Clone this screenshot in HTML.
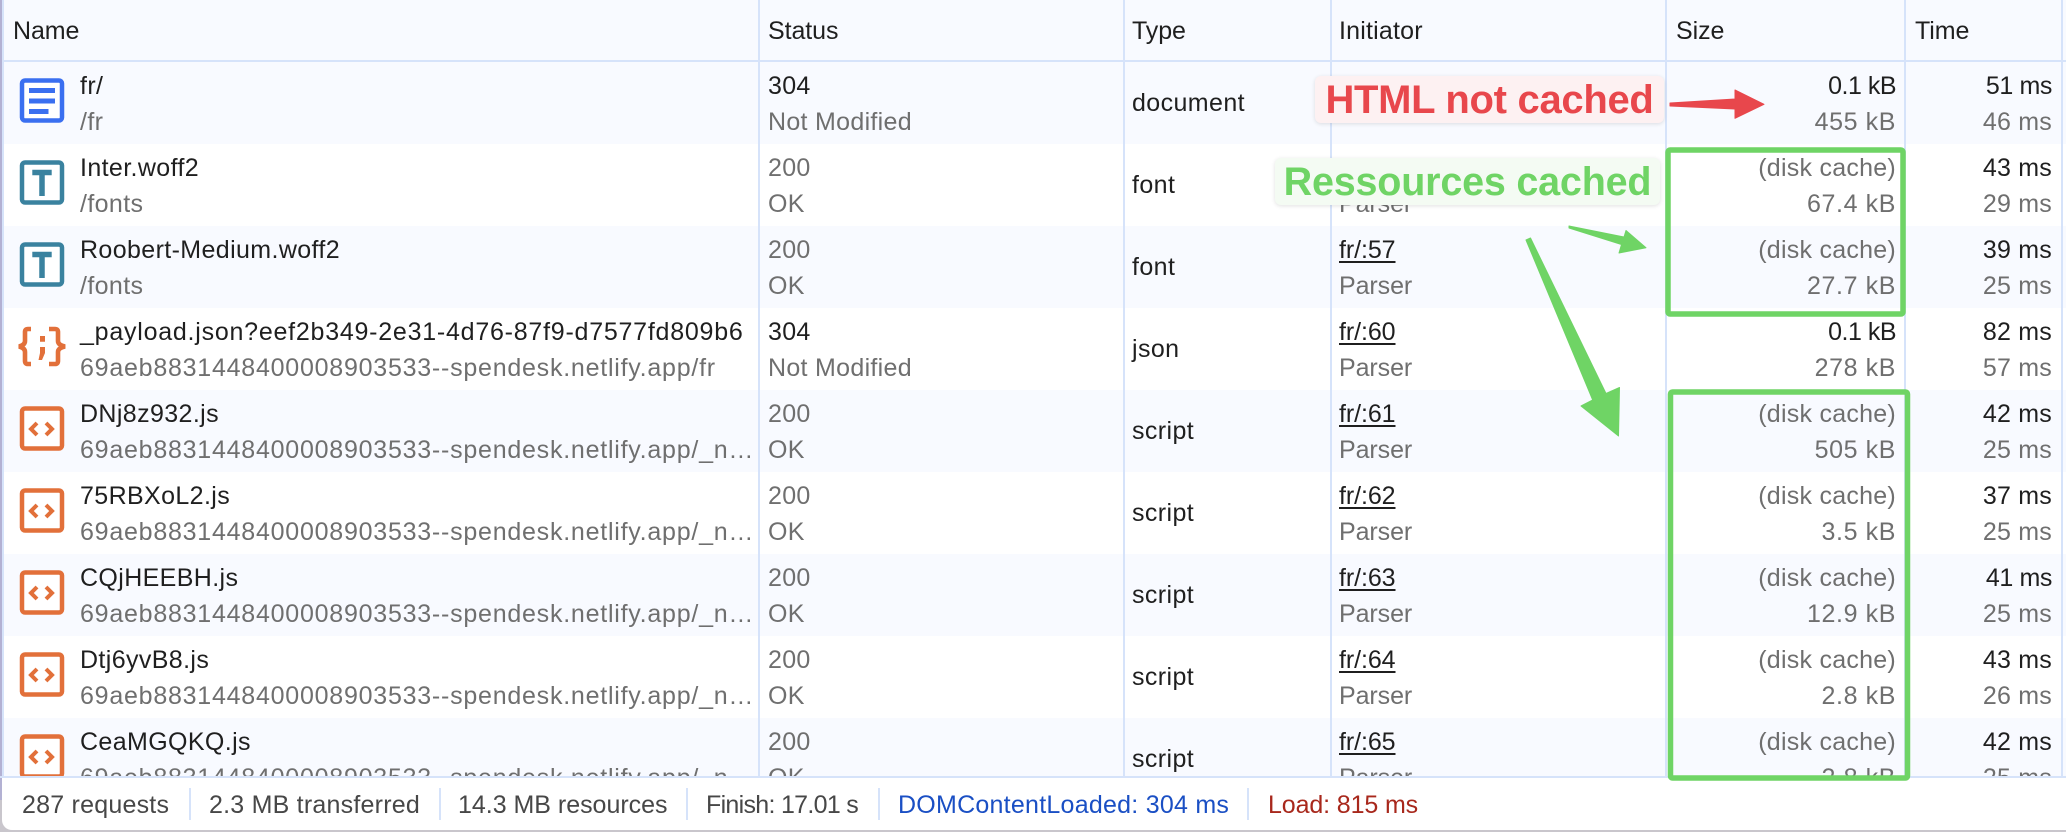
<!DOCTYPE html>
<html><head><meta charset="utf-8"><style>
html,body{margin:0;padding:0;background:#c9c6cc}
#w{position:relative;width:2066px;height:832px;overflow:hidden;background:#c9c6cc;font-family:"Liberation Sans",sans-serif;font-size:25px;letter-spacing:-.08px;color:#1f1f1f}
#win{position:absolute;left:2px;top:0;width:2064px;height:830px;background:#fff;border-radius:0 0 0 10px;overflow:hidden}
#strip{position:absolute;left:0;top:0;width:3px;height:800px;background:#b3b1d3}
#tb{position:absolute;left:0;top:0;width:2066px;height:777px;overflow:hidden}
.r{position:absolute;left:3px;width:2063px;height:82px}
.o{background:#f8faff}
.t{position:absolute;white-space:nowrap;line-height:36px}
.g{color:#6f6f6f}
.a{top:6px}.b{top:42px}
.n{left:77px;letter-spacing:.38px}.s{left:765px;letter-spacing:.3px}.y{left:1129px;top:23px;letter-spacing:.4px}.i{left:1336px}
.z{right:170px;letter-spacing:.25px}.z.b{letter-spacing:.6px}.m{right:14px;letter-spacing:.2px}
.k{letter-spacing:-.5px !important}
.q{letter-spacing:-.4px !important}
.v{letter-spacing:.76px}
.u{text-decoration:underline;text-underline-offset:3px;text-decoration-thickness:2px}
.l{position:absolute;top:0;width:2px;height:777px;background:#d6e3fa}
svg.c{position:absolute;left:16px;top:16px}
#h{position:absolute;left:3px;top:0;width:2063px;height:60px;background:#f8faff;border-bottom:2px solid #d6e3fa}
#f{position:absolute;left:0;top:776px;width:2066px;height:2px;background:#d6e3fa}
.ft{position:absolute;top:787px;white-space:nowrap;line-height:36px;color:#474747;letter-spacing:.22px}
.sp{position:absolute;top:788px;width:2px;height:32px;background:#d6e3fa}
.note{position:absolute;border-radius:6px;font-weight:bold;white-space:nowrap;box-shadow:0 1px 4px rgba(0,0,0,.12);text-align:center}
</style></head><body><div id="w"><div id="strip"></div><div id="win"></div>
<div id="tb">
<div id="h"></div>
<div class="t" style="left:13px;top:13px">Name</div>
<div class="t" style="left:768px;top:13px">Status</div>
<div class="t" style="left:1132px;top:13px">Type</div>
<div class="t" style="left:1339px;top:13px;letter-spacing:.2px">Initiator</div>
<div class="t" style="left:1676px;top:13px">Size</div>
<div class="t" style="left:1915px;top:13px">Time</div>

<div class="r o" style="top:62px">
<svg class="c" width="46" height="46" viewBox="0 0 46 46"><rect x="3" y="2.500" width="40" height="40" rx="3" fill="#fff" stroke="#3a6ff0" stroke-width="4.500"/><path d="M10 12.500H36M10 23H36M10 33.500H29.500" stroke="#3a6ff0" stroke-width="5" fill="none"/></svg>
<div class="t a n">fr/</div><div class="t b n g">/fr</div>
<div class="t a s">304</div><div class="t b s g">Not Modified</div>
<div class="t y">document</div>
<div class="t a z k">0.1 kB</div><div class="t b z g">455 kB</div>
<div class="t a m q">51 ms</div><div class="t b m g">46 ms</div></div>

<div class="r" style="top:144px">
<svg class="c" width="46" height="46" viewBox="0 0 46 46"><rect x="3" y="2.500" width="40" height="40" rx="3" fill="#fff" stroke="#3a829f" stroke-width="4.500"/><path d="M13.300 12.500H32.700M23 12V36" stroke="#3a829f" stroke-width="5.500" fill="none"/></svg>
<div class="t a n">Inter.woff2</div><div class="t b n g">/fonts</div>
<div class="t a s g">200</div><div class="t b s g">OK</div>
<div class="t y">font</div>
<div class="t a i u">fr/:56</div><div class="t b i g">Parser</div>
<div class="t a z g">(disk cache)</div><div class="t b z g">67.4 kB</div>
<div class="t a m">43 ms</div><div class="t b m g">29 ms</div></div>

<div class="r o" style="top:226px">
<svg class="c" width="46" height="46" viewBox="0 0 46 46"><rect x="3" y="2.500" width="40" height="40" rx="3" fill="#fff" stroke="#3a829f" stroke-width="4.500"/><path d="M13.300 12.500H32.700M23 12V36" stroke="#3a829f" stroke-width="5.500" fill="none"/></svg>
<div class="t a n">Roobert-Medium.woff2</div><div class="t b n g">/fonts</div>
<div class="t a s g">200</div><div class="t b s g">OK</div>
<div class="t y">font</div>
<div class="t a i u">fr/:57</div><div class="t b i g">Parser</div>
<div class="t a z g">(disk cache)</div><div class="t b z g">27.7 kB</div>
<div class="t a m">39 ms</div><div class="t b m g">25 ms</div></div>

<div class="r" style="top:308px">
<svg class="c" style="left:13px;top:18px" width="52" height="41" viewBox="0 0 52 41"><path d="M15 3H12Q9 3 9 6V15Q9 19 3 20.500Q9 22 9 26V35Q9 38 12 38H15M33 3H39Q42 3 42 6V15Q42 19 49 20.500Q42 22 42 26V35Q42 38 39 38H33" fill="none" stroke="#e2703a" stroke-width="4.600"/><path d="M24 10H29V15.700H24ZM24 21H29V27L26 34H22.500L24 27Z" fill="#e2703a"/></svg>
<div class="t a n v">_payload.json?eef2b349-2e31-4d76-87f9-d7577fd809b6</div><div class="t b n g v">69aeb8831448400008903533--spendesk.netlify.app/fr</div>
<div class="t a s">304</div><div class="t b s g">Not Modified</div>
<div class="t y">json</div>
<div class="t a i u">fr/:60</div><div class="t b i g">Parser</div>
<div class="t a z k">0.1 kB</div><div class="t b z g">278 kB</div>
<div class="t a m">82 ms</div><div class="t b m g">57 ms</div></div>

<div class="r o" style="top:390px">
<svg class="c" width="46" height="46" viewBox="0 0 46 46"><rect x="3" y="2.500" width="40" height="40" rx="3" fill="#fff" stroke="#e2703a" stroke-width="4.500"/><path d="M18 17L12 23L18 29M27 17L33 23L27 29" fill="none" stroke="#e2703a" stroke-width="4"/></svg>
<div class="t a n">DNj8z932.js</div><div class="t b n g v">69aeb8831448400008903533--spendesk.netlify.app/_n…</div>
<div class="t a s g">200</div><div class="t b s g">OK</div>
<div class="t y">script</div>
<div class="t a i u">fr/:61</div><div class="t b i g">Parser</div>
<div class="t a z g">(disk cache)</div><div class="t b z g">505 kB</div>
<div class="t a m">42 ms</div><div class="t b m g">25 ms</div></div>

<div class="r" style="top:472px">
<svg class="c" width="46" height="46" viewBox="0 0 46 46"><rect x="3" y="2.500" width="40" height="40" rx="3" fill="#fff" stroke="#e2703a" stroke-width="4.500"/><path d="M18 17L12 23L18 29M27 17L33 23L27 29" fill="none" stroke="#e2703a" stroke-width="4"/></svg>
<div class="t a n">75RBXoL2.js</div><div class="t b n g v">69aeb8831448400008903533--spendesk.netlify.app/_n…</div>
<div class="t a s g">200</div><div class="t b s g">OK</div>
<div class="t y">script</div>
<div class="t a i u">fr/:62</div><div class="t b i g">Parser</div>
<div class="t a z g">(disk cache)</div><div class="t b z g">3.5 kB</div>
<div class="t a m">37 ms</div><div class="t b m g">25 ms</div></div>

<div class="r o" style="top:554px">
<svg class="c" width="46" height="46" viewBox="0 0 46 46"><rect x="3" y="2.500" width="40" height="40" rx="3" fill="#fff" stroke="#e2703a" stroke-width="4.500"/><path d="M18 17L12 23L18 29M27 17L33 23L27 29" fill="none" stroke="#e2703a" stroke-width="4"/></svg>
<div class="t a n">CQjHEEBH.js</div><div class="t b n g v">69aeb8831448400008903533--spendesk.netlify.app/_n…</div>
<div class="t a s g">200</div><div class="t b s g">OK</div>
<div class="t y">script</div>
<div class="t a i u">fr/:63</div><div class="t b i g">Parser</div>
<div class="t a z g">(disk cache)</div><div class="t b z g">12.9 kB</div>
<div class="t a m q">41 ms</div><div class="t b m g">25 ms</div></div>

<div class="r" style="top:636px">
<svg class="c" width="46" height="46" viewBox="0 0 46 46"><rect x="3" y="2.500" width="40" height="40" rx="3" fill="#fff" stroke="#e2703a" stroke-width="4.500"/><path d="M18 17L12 23L18 29M27 17L33 23L27 29" fill="none" stroke="#e2703a" stroke-width="4"/></svg>
<div class="t a n">Dtj6yvB8.js</div><div class="t b n g v">69aeb8831448400008903533--spendesk.netlify.app/_n…</div>
<div class="t a s g">200</div><div class="t b s g">OK</div>
<div class="t y">script</div>
<div class="t a i u">fr/:64</div><div class="t b i g">Parser</div>
<div class="t a z g">(disk cache)</div><div class="t b z g">2.8 kB</div>
<div class="t a m">43 ms</div><div class="t b m g">26 ms</div></div>

<div class="r o" style="top:718px">
<svg class="c" width="46" height="46" viewBox="0 0 46 46"><rect x="3" y="2.500" width="40" height="40" rx="3" fill="#fff" stroke="#e2703a" stroke-width="4.500"/><path d="M18 17L12 23L18 29M27 17L33 23L27 29" fill="none" stroke="#e2703a" stroke-width="4"/></svg>
<div class="t a n">CeaMGQKQ.js</div><div class="t b n g v">69aeb8831448400008903533--spendesk.netlify.app/_n…</div>
<div class="t a s g">200</div><div class="t b s g">OK</div>
<div class="t y">script</div>
<div class="t a i u">fr/:65</div><div class="t b i g">Parser</div>
<div class="t a z g">(disk cache)</div><div class="t b z g">2.8 kB</div>
<div class="t a m">42 ms</div><div class="t b m g">25 ms</div></div>

<div class="l" style="left:2px"></div><div class="l" style="left:758px"></div><div class="l" style="left:1123px"></div><div class="l" style="left:1330px"></div><div class="l" style="left:1665px"></div><div class="l" style="left:1904px"></div><div class="l" style="left:2061px"></div>
</div>
<div id="f"></div>
<div class="ft" style="left:22px">287 requests</div>
<div class="sp" style="left:189px"></div>
<div class="ft" style="left:209px">2.3 MB transferred</div>
<div class="sp" style="left:439px"></div>
<div class="ft" style="left:458px;letter-spacing:-.02px">14.3 MB resources</div>
<div class="sp" style="left:686px"></div>
<div class="ft" style="left:706px;letter-spacing:-.7px">Finish: 17.01 s</div>
<div class="sp" style="left:878px"></div>
<div class="ft" style="left:898px;color:#1a4fc4;letter-spacing:.25px">DOMContentLoaded: 304 ms</div>
<div class="sp" style="left:1247px"></div>
<div class="ft" style="left:1268px;color:#a8281c;letter-spacing:-.12px">Load: 815 ms</div>

<div class="note" style="left:1315px;top:76px;width:349px;height:47px;line-height:48px;background:#fdf1f2;color:#e8474c;font-size:40px;letter-spacing:-.3px">HTML not cached</div>
<div class="note" style="left:1275px;top:158px;width:385px;height:47px;line-height:48px;background:#f4fbf3;color:#6fd465;font-size:39.500px;letter-spacing:-.2px">Ressources cached</div>

<svg style="position:absolute;left:0;top:0" width="2066" height="832" viewBox="0 0 2066 832">
<polygon points="1670,103 1735,99 1735,90 1764,104.300 1735,118.300 1735,109 1670,106" fill="#e8474c" stroke="#e8474c" stroke-width="1" stroke-linejoin="round"/>
<polygon points="1569,226 1624,237 1626,230.500 1646,247.700 1619,253 1621.500,244.500 1569,228" fill="#6fd465" stroke="#6fd465" stroke-width="1" stroke-linejoin="round"/>
<polygon points="1526,240 1530.500,238 1606,393.500 1619.500,387.500 1618.500,436 1581,406 1592.700,400" fill="#6fd465" stroke="#6fd465" stroke-width="1" stroke-linejoin="round"/>
<rect x="1668" y="150" width="235" height="164" rx="2" fill="none" stroke="#6fd465" stroke-width="5.500"/>
<rect x="1670.500" y="392" width="237" height="386" rx="2" fill="none" stroke="#6fd465" stroke-width="5.500"/>
</svg>
</div></body></html>
